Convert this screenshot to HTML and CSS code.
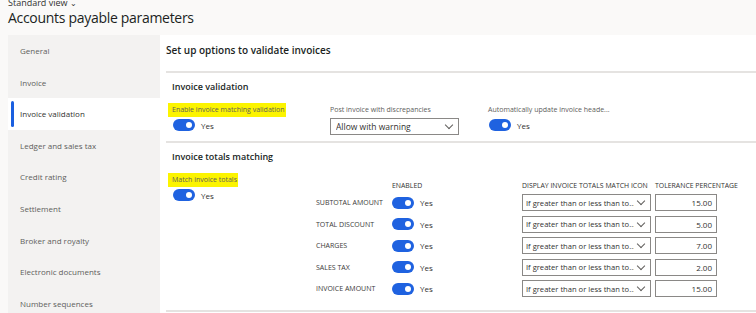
FILE: index.html
```html
<!DOCTYPE html>
<html lang="en">
<head>
  <meta charset="UTF-8">
  <title>Accounts payable parameters</title>
  <link rel="stylesheet" href="styles.css">
</head>
<body>
  <div class="page-head">
    <div class="view-picker">Standard view <span class="chev">&#8964;</span></div>
    <h1 class="page-title">Accounts payable parameters</h1>
  </div>

  <div class="main">
    <nav class="tabs">
      <div class="tab">General</div>
      <div class="tab">Invoice</div>
      <div class="tab active">Invoice validation</div>
      <div class="tab">Ledger and sales tax</div>
      <div class="tab">Credit rating</div>
      <div class="tab">Settlement</div>
      <div class="tab">Broker and royalty</div>
      <div class="tab">Electronic documents</div>
      <div class="tab">Number sequences</div>
    </nav>

    <section class="content">
      <div class="content-title">Set up options to validate invoices</div>

      <div class="group">
        <div class="group-title">Invoice validation</div>
        <div class="field-row">
          <div class="field f-enable">
            <label class="label hl">Enable invoice matching validation</label>
            <div class="toggle-line"><span class="toggle"></span><span class="yes">Yes</span></div>
          </div>
          <div class="field f-post">
            <label class="label">Post invoice with discrepancies</label>
            <div class="select wide"><span class="sel-text">Allow with warning</span><span class="caret"></span></div>
          </div>
          <div class="field">
            <label class="label">Automatically update invoice heade...</label>
            <div class="toggle-line"><span class="toggle"></span><span class="yes">Yes</span></div>
          </div>
        </div>
      </div>

      <div class="group last">
        <div class="group-title">Invoice totals matching</div>
        <div class="totals">
          <div class="field f-match">
            <label class="label hl">Match invoice totals</label>
            <div class="toggle-line"><span class="toggle"></span><span class="yes">Yes</span></div>
          </div>
          <div class="grid">
            <div class="gh"></div>
            <div class="gh">ENABLED</div>
            <div class="gh">DISPLAY INVOICE TOTALS MATCH ICON</div>
            <div class="gh">TOLERANCE PERCENTAGE</div>

            <div class="gl">SUBTOTAL AMOUNT</div>
            <div class="gc"><span class="toggle"></span><span class="yes">Yes</span></div>
            <div class="gc"><div class="select"><span class="sel-text">If greater than or less than to...</span><span class="caret"></span></div></div>
            <div class="gc"><div class="num">15.00</div></div>

            <div class="gl">TOTAL DISCOUNT</div>
            <div class="gc"><span class="toggle"></span><span class="yes">Yes</span></div>
            <div class="gc"><div class="select"><span class="sel-text">If greater than or less than to...</span><span class="caret"></span></div></div>
            <div class="gc"><div class="num">5.00</div></div>

            <div class="gl">CHARGES</div>
            <div class="gc"><span class="toggle"></span><span class="yes">Yes</span></div>
            <div class="gc"><div class="select"><span class="sel-text">If greater than or less than to...</span><span class="caret"></span></div></div>
            <div class="gc"><div class="num">7.00</div></div>

            <div class="gl">SALES TAX</div>
            <div class="gc"><span class="toggle"></span><span class="yes">Yes</span></div>
            <div class="gc"><div class="select"><span class="sel-text">If greater than or less than to...</span><span class="caret"></span></div></div>
            <div class="gc"><div class="num">2.00</div></div>

            <div class="gl">INVOICE AMOUNT</div>
            <div class="gc"><span class="toggle"></span><span class="yes">Yes</span></div>
            <div class="gc"><div class="select"><span class="sel-text">If greater than or less than to...</span><span class="caret"></span></div></div>
            <div class="gc"><div class="num">15.00</div></div>
          </div>
        </div>
      </div>
    </section>
  </div>
</body>
</html>
```

FILE: styles.css
```css
body {
  margin: 0;
  height: 313px;
  overflow: hidden;
  background-color: #faf9f8;
  font-family: 'Segoe UI', 'Open Sans', sans-serif;
  color: #323130;
}

.page-head {
  display: flow-root;
  padding-left: 8px;
  height: 35px;
}

.view-picker {
  font-size: 9px;
  line-height: 10px;
  margin-top: -2px;
  color: #323130;
}

.view-picker .chev {
  font-size: 8px;
}

.page-title {
  margin: 0;
  font-size: 14px;
  font-weight: 500;
  letter-spacing: -0.3px;
  line-height: 20px;
  color: #201f1e;
}

.main {
  display: flex;
  margin-left: 8px;
  height: 278px;
}

.tabs {
  width: 152px;
  background-color: #f3f2f1;
  flex-shrink: 0;
}

.tab {
  height: 31.6px;
  line-height: 31.6px;
  padding-left: 12px;
  font-size: 8px;
  color: #605e5c;
  position: relative;
}

.tab.active {
  background-color: #ffffff;
  color: #323130;
}

.tab.active::before {
  content: "";
  position: absolute;
  left: 3px;
  top: 3px;
  bottom: 3px;
  width: 3px;
  border-radius: 2px;
  background-color: #1a5fe0;
}

.content {
  flex: 1;
  background-color: #ffffff;
  padding-left: 6px;
}

.content-title {
  height: 36px;
  line-height: 30px;
  font-size: 10px;
  font-weight: 600;
  color: #201f1e;
  border-bottom: 2px solid #e5e3e1;
}

.group {
  border-bottom: 2px solid #e5e3e1;
  padding-left: 6px;
  height: 68px;
}

.group.last {
  height: 167px;
}

.group-title {
  height: 29px;
  line-height: 28px;
  font-size: 9px;
  font-weight: 600;
  color: #201f1e;
}

.field-row {
  display: flex;
}

.field {
  display: flex;
  flex-direction: column;
}

.f-enable {
  width: 158px;
}

.f-post {
  width: 158px;
}

.label {
  font-size: 7px;
  line-height: 14px;
  height: 14px;
  margin-top: 1px;
  color: #605e5c;
  align-self: flex-start;
}

.label.hl {
  background-color: #fcf400;
  margin-left: -4px;
  padding: 0 1px 0 4px;
}

.toggle-line {
  display: flex;
  align-items: center;
  height: 16px;
  margin-left: 1px;
}

.toggle {
  display: inline-block;
  width: 22px;
  height: 12px;
  border-radius: 6px;
  background-color: #1f62e0;
  position: relative;
  flex-shrink: 0;
}

.toggle::after {
  content: "";
  position: absolute;
  right: 3px;
  top: 3px;
  width: 6px;
  height: 6px;
  border-radius: 50%;
  background-color: #ffffff;
}

.yes {
  font-size: 8px;
  color: #323130;
  margin-left: 6px;
}

.select {
  display: flex;
  align-items: center;
  justify-content: space-between;
  box-sizing: border-box;
  width: 129px;
  height: 17px;
  border: 1px solid #8a8886;
  padding: 0 6px 0 3px;
  font-size: 7.6px;
  color: #323130;
  background-color: #ffffff;
}

.sel-text {
  white-space: nowrap;
  overflow: hidden;
}

.select.wide {
  margin-top: 1px;
  font-size: 8.5px;
  padding-left: 5px;
}

.caret {
  flex-shrink: 0;
  width: 5px;
  height: 5px;
  border-right: 1px solid #605e5c;
  border-bottom: 1px solid #605e5c;
  transform: rotate(45deg);
  margin-top: -3px;
  margin-left: 4px;
}

.totals {
  display: flex;
  margin-top: 7px;
}

.f-match {
  width: 144px;
  margin-top: -7px;
}

.grid {
  display: grid;
  grid-template-columns: 76px 130px 133px 63px;
  grid-template-rows: 13px repeat(5, 21.5px);
  align-items: center;
}

.gh {
  font-size: 6.9px;
  color: #323130;
  white-space: nowrap;
}

.gl {
  font-size: 7px;
  color: #3b3a39;
  white-space: nowrap;
}

.gc {
  display: flex;
  align-items: center;
}

.num {
  box-sizing: border-box;
  width: 62px;
  height: 17px;
  border: 1px solid #8a8886;
  text-align: right;
  padding-right: 4px;
  font-size: 8px;
  line-height: 15px;
  color: #323130;
}
```
